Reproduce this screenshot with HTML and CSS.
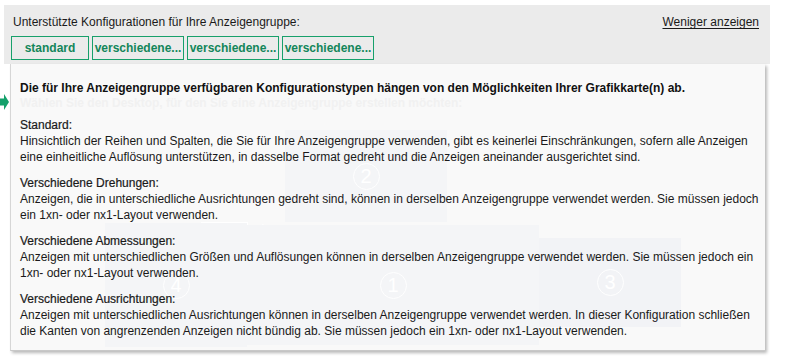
FILE: index.html
```html
<!DOCTYPE html>
<html lang="de">
<head>
<meta charset="utf-8">
<title>Anzeigengruppe</title>
<link rel="stylesheet" href="styles.css">
</head>
<body>
<div class="page">
  <section class="band">
    <div class="band-head">
      <span class="band-label">Unterstützte Konfigurationen für Ihre Anzeigengruppe:</span>
      <a class="band-link" href="#">Weniger anzeigen</a>
    </div>
    <div class="chips">
      <button class="chip chip-first">standard</button>
      <button class="chip">verschiedene...</button>
      <button class="chip">verschiedene...</button>
      <button class="chip">verschiedene...</button>
    </div>
  </section>

  <svg class="arrow" width="9" height="16" viewBox="0 0 9 16"><path d="M0 4.5H4V0L9 8L4 16V11.5H0Z" fill="#13a06a"/></svg>

  <section class="panel">
    <div class="ghost" aria-hidden="true">
      <div class="ghost-text">Wählen Sie den Desktop, für den Sie eine Anzeigengruppe erstellen möchten:</div>
      <div class="mon mon-2"><span class="num">2</span></div>
      <div class="mon mon-blank"><span class="star">*</span></div>
      <div class="mon mon-4"><span class="num">4</span></div>
      <div class="mon mon-1"><span class="num">1</span></div>
      <div class="mon mon-3"><span class="num">3</span></div>
    </div>
    <div class="content">
      <p class="intro">Die für Ihre Anzeigengruppe verfügbaren Konfigurationstypen hängen von den Möglichkeiten Ihrer Grafikkarte(n) ab.</p>
      <div class="item">
        <div class="item-title">Standard:</div>
        <div class="item-text">Hinsichtlich der Reihen und Spalten, die Sie für Ihre Anzeigengruppe verwenden, gibt es keinerlei Einschränkungen, sofern alle Anzeigen<br>eine einheitliche Auflösung unterstützen, in dasselbe Format gedreht und die Anzeigen aneinander ausgerichtet sind.</div>
      </div>
      <div class="item">
        <div class="item-title">Verschiedene Drehungen:</div>
        <div class="item-text">Anzeigen, die in unterschiedliche Ausrichtungen gedreht sind, können in derselben Anzeigengruppe verwendet werden. Sie müssen jedoch<br>ein 1xn- oder nx1-Layout verwenden.</div>
      </div>
      <div class="item">
        <div class="item-title">Verschiedene Abmessungen:</div>
        <div class="item-text">Anzeigen mit unterschiedlichen Größen und Auflösungen können in derselben Anzeigengruppe verwendet werden. Sie müssen jedoch ein<br>1xn- oder nx1-Layout verwenden.</div>
      </div>
      <div class="item">
        <div class="item-title">Verschiedene Ausrichtungen:</div>
        <div class="item-text">Anzeigen mit unterschiedlichen Ausrichtungen können in derselben Anzeigengruppe verwendet werden. In dieser Konfiguration schließen<br>die Kanten von angrenzenden Anzeigen nicht bündig ab. Sie müssen jedoch ein 1xn- oder nx1-Layout verwenden.</div>
      </div>
    </div>
  </section>
</div>
</body>
</html>
```

FILE: styles.css
```css
* { box-sizing: border-box; }

html, body {
  margin: 0;
  padding: 0;
  background: #ffffff;
}

body {
  font-family: "Liberation Sans", Arial, sans-serif;
  font-size: 12px;
  color: #1a1a1a;
  width: 785px;
  height: 357px;
  overflow: hidden;
}

.page {
  position: relative;
  padding-top: 5px;
}

.band {
  margin-left: 4px;
  width: 766px;
  height: 59px;
  background: #ebebeb;
  padding: 9px 11px 0 9px;
}

.band-head {
  display: flex;
  justify-content: space-between;
  align-items: baseline;
  line-height: 16px;
}

.band-label { color: #1a1a1a; }

.band-link {
  color: #1a1a1a;
  text-decoration: underline;
  text-underline-offset: 2px;
}

.chips {
  display: flex;
  gap: 3px;
  margin-top: 6px;
  margin-left: -2px;
}

.chip {
  height: 24px;
  width: 92px;
  padding: 0;
  border: 1px solid #17a06b;
  background: #ebebeb;
  color: #13865a;
  font-family: inherit;
  font-size: 12px;
  font-weight: bold;
}

.chip-first { width: 78px; }

.arrow {
  position: absolute;
  left: 0;
  top: 94px;
}

.panel {
  position: relative;
  margin-left: 10px;
  width: 755px;
  height: 287px;
  background: #f9f9f9;
  border-left: 1px solid #d6d6d6;
  border-bottom: 1px solid #c8c8c8;
  box-shadow: 2px 2px 3px rgba(0, 0, 0, 0.28);
  overflow: hidden;
}

.ghost {
  position: absolute;
  inset: 0;
}

.ghost-text {
  position: absolute;
  left: 9px;
  top: 31px;
  font-weight: bold;
  color: #f1f1f1;
  line-height: 16px;
  white-space: nowrap;
}

.mon {
  position: absolute;
  background: #f4f5f7;
  display: flex;
  align-items: center;
  justify-content: center;
}

.mon-2 { left: 274px; top: 66px; width: 162px; height: 92px; }
.mon-blank { left: 190px; top: 158px; width: 47px; height: 18px; background: #ffffff; justify-content: flex-end; }
.mon-4 { left: 94px; top: 159px; width: 142px; height: 124px; }
.mon-1 { left: 236px; top: 161px; width: 292px; height: 120px; }
.mon-3 { left: 528px; top: 174px; width: 142px; height: 89px; background: #f2f3f6; }

.num {
  width: 27px;
  height: 27px;
  border: 1.5px solid #ffffff;
  border-radius: 50%;
  color: #ffffff;
  font-size: 20px;
  line-height: 24px;
  text-align: center;
}

.star {
  position: relative;
  left: 18px;
  color: #ffffff;
  font-size: 16px;
}

.content {
  position: relative;
  padding: 16px 10px 0 9px;
}

.intro {
  margin: 0 0 21px 0;
  font-weight: bold;
  line-height: 16px;
  color: #111111;
  white-space: nowrap;
}

.item {
  margin-bottom: 10px;
  line-height: 16px;
}

.item-title {
  color: #1a1a1a;
  -webkit-text-stroke: 0.2px #1a1a1a;
}

.item-text {
  color: #1a1a1a;
  white-space: nowrap;
}
```
